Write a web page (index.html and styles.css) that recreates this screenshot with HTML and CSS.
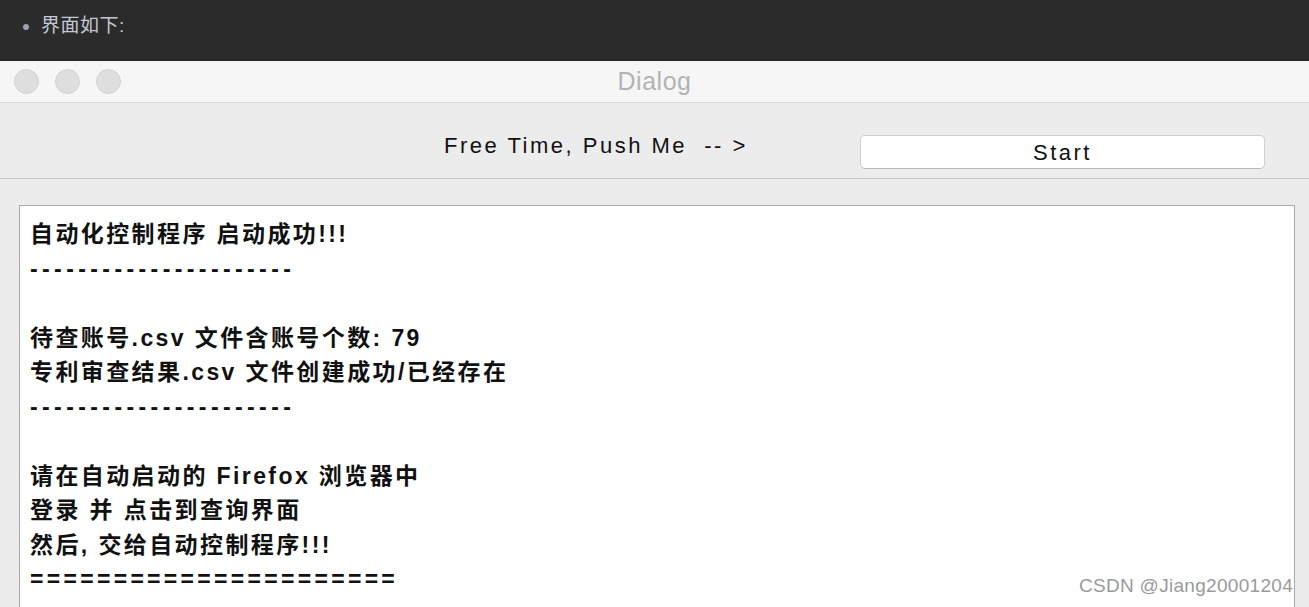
FILE: index.html
```html
<!DOCTYPE html>
<html lang="zh-CN">
<head>
    <meta charset="UTF-8">
    <meta name="viewport" content="width=device-width, initial-scale=1.0">
    <title>Dialog</title>
    <link rel="stylesheet" href="styles.css">
</head>
<body>
    <div class="post">
        <ul>
            <li>界面如下:</li>
        </ul>
    </div>

    <div class="window">
        <div class="titlebar">
            <div class="lights">
                <span class="light"></span>
                <span class="light"></span>
                <span class="light"></span>
            </div>
            <div class="title">Dialog</div>
        </div>

        <div class="toolbar">
            <span class="push-label">Free Time, Push Me&nbsp; -- &gt;</span>
            <button class="start-btn">Start</button>
        </div>

        <div class="content">
            <div class="log">
                <p>自动化控制程序 启动成功!!!</p>
                <p class="dash">----------------------</p>
                <p>&nbsp;</p>
                <p>待查账号.csv 文件含账号个数: 79</p>
                <p>专利审查结果.csv 文件创建成功/已经存在</p>
                <p class="dash">----------------------</p>
                <p>&nbsp;</p>
                <p>请在自动启动的 Firefox 浏览器中</p>
                <p>登录 并 点击到查询界面</p>
                <p>然后, 交给自动控制程序!!!</p>
                <p class="equals">======================</p>
            </div>
        </div>

        <div class="watermark">CSDN @Jiang20001204</div>
    </div>
</body>
</html>
```

FILE: styles.css
```css
body {
    margin: 0;
    background-color: #ececec;
    font-family: "Liberation Sans", "Noto Sans CJK SC", sans-serif;
    overflow: hidden;
}
.post {
    background-color: #2b2b2b;
    height: 61px;
    box-sizing: border-box;
    padding-top: 12px;
}
.post ul {
    margin: 0;
    padding-left: 41px;
    color: #c3cad6;
    font-size: 19px;
    line-height: 28px;
    letter-spacing: 0.5px;
}
.post li::marker {
    color: #9aa3b0;
}
.window {
    position: relative;
    background-color: #ececec;
    height: 546px;
    overflow: hidden;
}
.titlebar {
    height: 41px;
    background-color: #f6f6f6;
    border-bottom: 1px solid #d9d9d9;
    display: flex;
    align-items: center;
    position: relative;
}
.lights {
    display: flex;
    gap: 16px;
    padding-left: 14px;
}
.light {
    width: 23px;
    height: 23px;
    border-radius: 50%;
    background-color: #dedede;
    border: 1px solid #d3d3d3;
}
.title {
    position: absolute;
    left: 0;
    right: 0;
    text-align: center;
    color: #b3b3b3;
    font-size: 25px;
    letter-spacing: 0.5px;
}
.toolbar {
    height: 76px;
    border-bottom: 1px solid #c9c9c9;
    display: flex;
    align-items: flex-start;
    padding-left: 444px;
    box-sizing: border-box;
    padding-top: 30px;
}
.push-label {
    font-size: 22px;
    line-height: 26px;
    letter-spacing: 2.5px;
    color: #111;
    width: 416px;
}
.start-btn {
    width: 405px;
    height: 34px;
    margin-top: 2px;
    background-color: #fff;
    border: 1px solid #cfcfcf;
    border-bottom-color: #b8b8b8;
    border-radius: 5px;
    font-family: "Liberation Sans", sans-serif;
    font-size: 22px;
    letter-spacing: 2.5px;
    color: #111;
    padding: 2px 0 0;
}
.content {
    padding: 26px 14px 0 19px;
}
.log {
    background-color: #fff;
    border: 1px solid #a9a9a9;
    height: 420px;
    padding: 11px 10px 0 10px;
}
.log p {
    margin: 0;
    font-size: 23px;
    font-weight: bold;
    letter-spacing: 2.4px;
    line-height: 34.5px;
    color: #111;
    white-space: pre;
}
.log p.dash {
    letter-spacing: 4.4px;
}
.log p.equals {
    letter-spacing: 3.3px;
}
.watermark {
    position: absolute;
    right: 16px;
    bottom: 10px;
    font-size: 19px;
    letter-spacing: 0.3px;
    color: #9a9a9a;
    text-shadow: 0 0 2px #fff;
}
```
